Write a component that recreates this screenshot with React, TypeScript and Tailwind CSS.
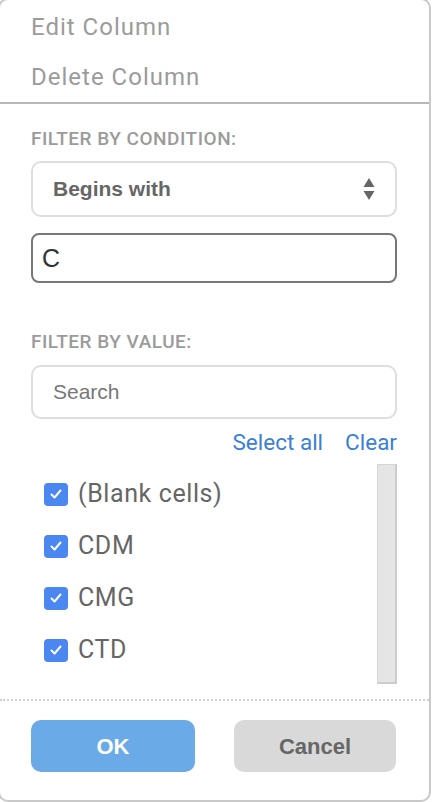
import { useState } from 'react';

const values = ['(Blank cells)', 'CDM', 'CMG', 'CTD'];

function Check() {
  return (
    <span className="w-[24px] h-[23px] rounded-[4px] bg-[#4a87f0] flex items-center justify-center shrink-0">
      <svg width="14" height="14" viewBox="0 0 14 14" fill="none">
        <path d="M2.5 7.5 L5.6 10.5 L11.5 3.5" stroke="white" strokeWidth="2" strokeLinecap="round" strokeLinejoin="round" />
      </svg>
    </span>
  );
}

export default function App() {
  const [text, setText] = useState('C');

  return (
    <div className="w-[432px] h-[802px] overflow-hidden bg-white">
      <div className="-ml-[2px] -mt-[2px] w-[433px] h-[804px] border-[2px] border-[#c9c9c9] rounded-[10px] bg-white flex flex-col font-['Roboto',sans-serif]">
        <div className="pt-[2px]">
          <div className="h-[50px] flex items-center pl-[31px] text-[24px] tracking-[1px] text-[#9b9b9b]">Edit Column</div>
          <div className="h-[50px] flex items-center pl-[31px] text-[24px] tracking-[1px] text-[#9b9b9b]">Delete Column</div>
        </div>
        <div className="h-[2px] bg-[#b8b8b8]" />

        <div className="px-[31px] pr-[32px]">
          <div className="mt-[25px] h-[20px] flex items-center text-[19px] font-medium tracking-[0.5px] text-[#9b9b9b]">FILTER BY CONDITION:</div>
          <div className="mt-[12px] h-[56px] rounded-[10px] border-[2px] border-[#dedede] flex items-center justify-between pl-[20px] pr-[20px]">
            <span className="font-['Liberation_Sans',sans-serif] font-bold text-[21px] text-[#666666]">Begins with</span>
            <svg width="12" height="26" viewBox="0 0 12 26">
              <path d="M6 2 L11.5 11 L0.5 11 Z" fill="#666666" />
              <path d="M6 24 L11.5 15 L0.5 15 Z" fill="#666666" />
            </svg>
          </div>
          <input
            value={text}
            onChange={(e) => setText(e.target.value)}
            className="mt-[16px] w-full h-[50px] rounded-[8px] border-[2px] border-[#777777] px-[9px] font-['Liberation_Sans',sans-serif] text-[25px] text-[#333333] outline-none"
          />

          <div className="mt-[49px] h-[20px] flex items-center text-[19px] font-medium tracking-[0.5px] text-[#9b9b9b]">FILTER BY VALUE:</div>
          <div className="mt-[13px] h-[54px] rounded-[10px] border-[2px] border-[#dedede] flex items-center pl-[20px]">
            <span className="font-['Liberation_Sans',sans-serif] text-[21px] text-[#777777]">Search</span>
          </div>
          <div className="mt-[10px] h-[28px] flex items-center justify-end gap-[22px] text-[22.5px] text-[#3a80d6]">
            <span>Select all</span>
            <span>Clear</span>
          </div>

          <div className="mt-[7px] h-[220px] flex">
            <div className="flex-1 flex flex-col pl-[13px] pt-[4px]">
              {values.map((v) => (
                <div key={v} className="h-[52px] flex items-center gap-[10px]">
                  <Check />
                  <span className="text-[25px] tracking-[0.6px] text-[#666666]">{v}</span>
                </div>
              ))}
            </div>
            <div className="w-[20px] h-full bg-[#e5e5e5] border-r-[2px] border-b-[2px] border-[#cccccc] border-t border-l border-t-[#d6d6d6] border-l-[#d6d6d6]" />
          </div>
        </div>

        <div className="mt-[15px] border-t-[2px] border-dotted border-[#cfcfcf]" />

        <div className="px-[31px] pr-[33px] mt-[19px] flex justify-between">
          <button className="w-[164px] h-[52px] rounded-[10px] bg-[#69aae7] text-white font-bold text-[22px] font-['Liberation_Sans',sans-serif]">OK</button>
          <button className="w-[162px] h-[52px] rounded-[10px] bg-[#d9d9d9] text-[#666666] font-bold text-[22px] font-['Liberation_Sans',sans-serif]">Cancel</button>
        </div>
      </div>
    </div>
  );
}
